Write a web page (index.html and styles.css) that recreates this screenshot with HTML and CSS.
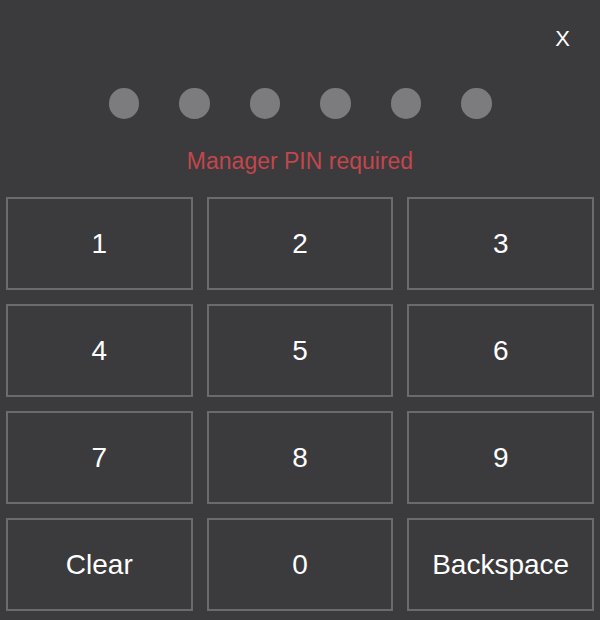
FILE: index.html
```html
<!DOCTYPE html>
<html lang="en">
<head>
<meta charset="utf-8">
<title>Manager PIN</title>
<link rel="stylesheet" href="styles.css">
</head>
<body>
<div class="screen">
  <div class="top">
    <span class="close">X</span>
  </div>
  <div class="dots">
    <span class="dot"></span>
    <span class="dot"></span>
    <span class="dot"></span>
    <span class="dot"></span>
    <span class="dot"></span>
    <span class="dot"></span>
  </div>
  <div class="msg">Manager PIN required</div>
  <div class="pad">
    <div class="key">1</div>
    <div class="key">2</div>
    <div class="key">3</div>
    <div class="key">4</div>
    <div class="key">5</div>
    <div class="key">6</div>
    <div class="key">7</div>
    <div class="key">8</div>
    <div class="key">9</div>
    <div class="key">Clear</div>
    <div class="key">0</div>
    <div class="key">Backspace</div>
  </div>
</div>
</body>
</html>
```
FILE: styles.css
```css
html, body {
  margin: 0;
  padding: 0;
  background: #3b3a3c;
}
body {
  font-family: "Liberation Sans", Arial, Helvetica, sans-serif;
  color: #ffffff;
  width: 600px;
  height: 620px;
  overflow: hidden;
}
.screen {
  display: flex;
  flex-direction: column;
}
.top {
  display: flex;
  justify-content: flex-end;
  padding: 26px 30px 0 0;
  height: 25px;
}
.close {
  font-size: 22px;
  line-height: 25px;
  color: #ffffff;
}
.dots {
  display: flex;
  justify-content: center;
  gap: 40px;
  margin-top: 37px;
}
.dot {
  width: 30.5px;
  height: 30.5px;
  border-radius: 50%;
  background: #7c7b7d;
}
.msg {
  margin-top: 29px;
  text-align: center;
  font-size: 23px;
  line-height: 26px;
  color: #c2474d;
}
.pad {
  margin-top: 23.5px;
  padding: 0 6px;
  display: grid;
  grid-template-columns: repeat(3, 1fr);
  grid-auto-rows: 93px;
  gap: 14px;
}
.key {
  box-sizing: border-box;
  border: 2px solid #6b6a6c;
  display: flex;
  align-items: center;
  justify-content: center;
  font-size: 28px;
  color: #ffffff;
}
```
